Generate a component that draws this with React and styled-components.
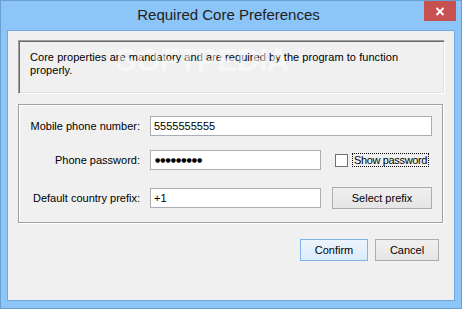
import React from "react";
import styled, { createGlobalStyle } from "styled-components";

const Global = createGlobalStyle`
  html, body { margin: 0; padding: 0; background: #ffffff; }
  #root { width: 462px; height: 309px; }
  * { box-sizing: border-box; }
`;

const Window = styled.div`
  width: 462px;
  height: 309px;
  background: #8cc5f7;
  border: 1px solid #6c9fd0;
  display: flex;
  flex-direction: column;
  font-family: "Liberation Sans", Arial, sans-serif;
  font-size: 11px;
  color: #000;
`;

const TitleBar = styled.div`
  height: 29px;
  display: grid;
  grid-template-columns: 1fr auto 1fr;
  align-items: start;
  padding-right: 5px;
`;

const Title = styled.div`
  grid-column: 2;
  font-size: 15px;
  line-height: 18px;
  padding-top: 5px;
  color: #222;
  white-space: nowrap;
`;

const CloseButton = styled.div`
  grid-column: 3;
  justify-self: end;
  width: 32px;
  height: 20px;
  background: #c75050;
  display: flex;
  align-items: center;
  justify-content: center;
`;

const Client = styled.div`
  position: relative;
  margin: 0 6px 7px 6px;
  flex: 1;
  background: #f0f0f0;
  border: 1px solid #72a8dc;
  padding: 9px 9px 0 10px;
  display: flex;
  flex-direction: column;
`;

const Watermark = styled.div`
  position: absolute;
  left: 108px;
  top: 12px;
  font-size: 31px;
  font-weight: bold;
  letter-spacing: -0.5px;
  color: rgba(255, 255, 255, 0.55);
  pointer-events: none;
`;

const Description = styled.div`
  height: 54px;
  border: 1px solid;
  border-color: #a0a0a0 #ffffff #ffffff #a0a0a0;
  box-shadow: inset 1px 1px 0 #696969, inset -1px -1px 0 #e3e3e3;
  padding: 10px 10px 0 11px;
  line-height: 13px;
  letter-spacing: 0.05px;
`;

const Group = styled.div`
  margin-top: 10px;
  margin-right: 2px;
  height: 119px;
  border: 1px solid #a0a0a0;
  box-shadow: inset 1px 1px 0 #ffffff, 1px 1px 0 #ffffff;
  padding-top: 11px;
  display: flex;
  flex-direction: column;
`;

const Row = styled.div`
  display: flex;
  align-items: center;
  margin-top: ${(p) => p.$gap || 0}px;
  height: ${(p) => p.$h || 20}px;
`;

const Label = styled.div`
  width: 121px;
  text-align: right;
  margin-right: 10px;
  white-space: nowrap;
`;

const Field = styled.div`
  width: ${(p) => p.$w}px;
  height: 20px;
  background: #fff;
  border: 1px solid #abadb3;
  padding: 0 3px;
  display: flex;
  align-items: center;
  white-space: nowrap;
`;

const Dots = styled.span`
  font-family: "DejaVu Sans", sans-serif;
  font-size: 6px;
  line-height: 6px;
  padding-left: 1px;
`;

const CheckWrap = styled.div`
  display: flex;
  align-items: center;
  margin-left: 14px;
`;

const CheckBox = styled.div`
  width: 13px;
  height: 13px;
  border: 1px solid #707070;
  background: #fff;
`;

const CheckLabel = styled.div`
  margin-left: 4px;
  border: 1px dotted #000;
  padding: 0 1px 0 1px;
  line-height: 12px;
  letter-spacing: -0.35px;
`;

const Button = styled.div`
  width: ${(p) => p.$w}px;
  height: 22px;
  margin-left: ${(p) => p.$ml || 0}px;
  display: flex;
  align-items: center;
  justify-content: center;
  border: 1px solid ${(p) => (p.$default ? "#7eb4ea" : "#acacac")};
  background: ${(p) =>
    p.$default
      ? "linear-gradient(#ecf4fc, #dcecfc)"
      : "linear-gradient(#f0f0f0, #e5e5e5)"};
`;

const ButtonRow = styled.div`
  display: flex;
  justify-content: flex-end;
  gap: 7px;
  margin-top: 16px;
  padding-right: 6px;
`;

export default function App() {
  return (
    <>
      <Global />
      <Window>
        <TitleBar>
          <Title>Required Core Preferences</Title>
          <CloseButton>
            <svg width="10" height="9" viewBox="0 0 10 9">
              <path d="M1.5 1 L8.5 8 M8.5 1 L1.5 8" stroke="#fff" strokeWidth="2" />
            </svg>
          </CloseButton>
        </TitleBar>
        <Client>
          <Watermark>SOFTPEDIA</Watermark>
          <Description>
            Core properties are mandatory and are required by the program to function properly.
          </Description>
          <Group>
            <Row>
              <Label>Mobile phone number:</Label>
              <Field $w={282}>5555555555</Field>
            </Row>
            <Row $gap={14}>
              <Label>Phone password:</Label>
              <Field $w={171}>
                <Dots>●●●●●●●●●</Dots>
              </Field>
              <CheckWrap>
                <CheckBox />
                <CheckLabel>Show password</CheckLabel>
              </CheckWrap>
            </Row>
            <Row $gap={17} $h={22}>
              <Label>Default country prefix:</Label>
              <Field $w={171}>+1</Field>
              <Button $w={100} $ml={11}>Select prefix</Button>
            </Row>
          </Group>
          <ButtonRow>
            <Button $w={68} $default>Confirm</Button>
            <Button $w={64}>Cancel</Button>
          </ButtonRow>
        </Client>
      </Window>
    </>
  );
}
